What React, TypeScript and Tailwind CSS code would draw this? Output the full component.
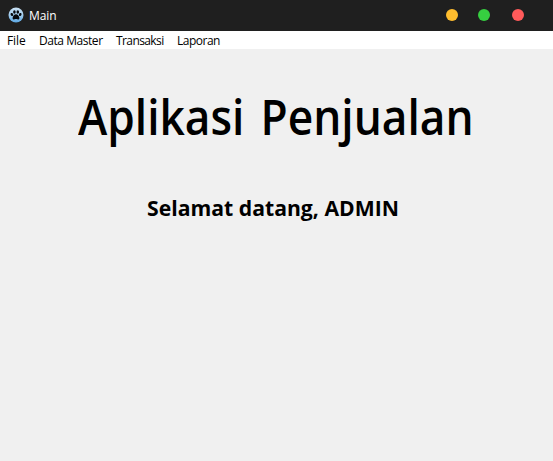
import React from "react";

const menus = [
  { label: "File", style: "w-8 tracking-[-0.1px]" },
  { label: "Data Master", style: "w-[77px] tracking-[-0.45px]" },
  { label: "Transaksi", style: "w-[61px] tracking-[-0.6px]" },
  { label: "Laporan", style: "w-[60px] tracking-[-0.5px]" },
];

function PawIcon() {
  return (
    <svg className="h-4 w-4" viewBox="0 0 16 16">
      <defs>
        <linearGradient id="disc" x1="0" y1="0" x2="0" y2="1">
          <stop offset="0" stopColor="#c9e0f2" />
          <stop offset="0.5" stopColor="#a3cdee" />
          <stop offset="1" stopColor="#5aa6e2" />
        </linearGradient>
      </defs>
      <circle cx="8" cy="8" r="7.5" fill="url(#disc)" />
      <g fill="#05080c">
        <ellipse cx="3.9" cy="7.5" rx="1.3" ry="1.6" transform="rotate(-25 3.9 7.5)" />
        <ellipse cx="6.4" cy="5" rx="1.3" ry="1.8" />
        <ellipse cx="9.8" cy="5" rx="1.3" ry="1.8" />
        <ellipse cx="12.2" cy="7.5" rx="1.3" ry="1.6" transform="rotate(25 12.2 7.5)" />
        <path d="M8 7.2C6.2 7.2 4.6 9.4 4.6 10.9c0 1.5 1.3 1.8 2.2 1.4.8-.3 1.6-.3 2.4 0 1 .4 2.2.1 2.2-1.4C11.4 9.4 9.8 7.2 8 7.2Z" />
      </g>
    </svg>
  );
}

export default function App() {
  return (
    <div className="flex h-[461px] w-[553px] flex-col overflow-hidden bg-[#f0f0f0] font-['Open_Sans','Noto_Sans',sans-serif] text-black">
      <header className="flex h-[31px] shrink-0 items-center bg-[#1f1f1f] pb-px pl-2 pr-[29px]">
        <PawIcon />
        <span className="mt-px ml-[5px] text-xs leading-4 tracking-[-0.1px] text-white">Main</span>
        <div className="ml-auto flex items-center">
          <span className="h-3 w-3 rounded-full bg-[#ffbd2e]" />
          <span className="ml-5 h-3 w-3 rounded-full bg-[#36cf40]" />
          <span className="ml-[22px] h-3 w-3 rounded-full bg-[#ff5a5a]" />
        </div>
      </header>
      <nav className="flex h-[18px] shrink-0 items-center bg-white pt-0.5 pl-[7px] text-xs leading-4">
        {menus.map((m) => (
          <span key={m.label} className={`${m.style} whitespace-nowrap`}>
            {m.label}
          </span>
        ))}
      </nav>
      <main className="flex flex-col">
        <h1 className="mt-9 ml-[78px] origin-left scale-x-[0.922] text-5xl leading-[64px] font-semibold whitespace-nowrap [word-spacing:5px]">
          Aplikasi Penjualan
        </h1>
        <h2 className="mt-[43px] ml-[147px] origin-left scale-x-[0.963] text-[22px] leading-[30px] font-bold whitespace-nowrap">
          Selamat datang, ADMIN
        </h2>
      </main>
    </div>
  );
}
